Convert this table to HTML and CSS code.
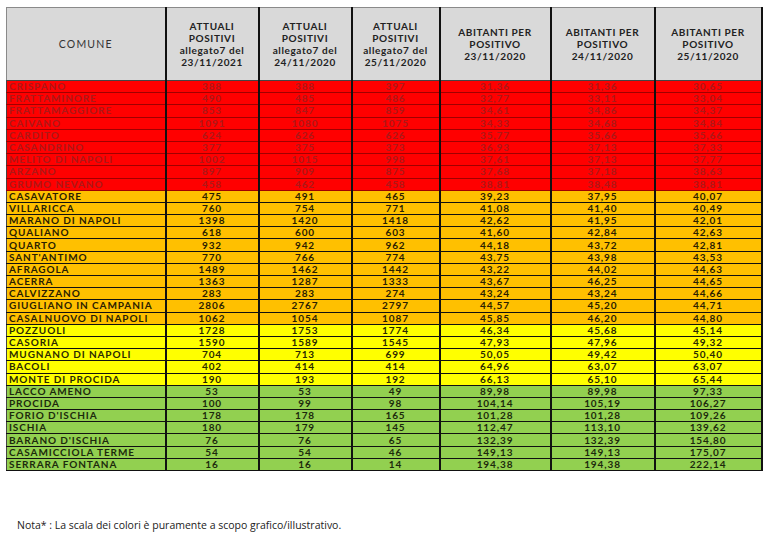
FILE: index.html
```html
<!DOCTYPE html>
<html lang="it">
<head>
    <meta charset="UTF-8">
    <meta name="viewport" content="width=device-width, initial-scale=1.0">
    <title>Positivi per comune</title>
    <link rel="stylesheet" href="styles.css">
</head>
<body>

    <!-- Tabella positivi -->
    <table class="data-table">
        <colgroup>
            <col class="c-name">
            <col class="c-a">
            <col class="c-a">
            <col class="c-b">
            <col class="c-c">
            <col class="c-d">
            <col class="c-e">
        </colgroup>
        <thead>
            <tr>
                <th class="th-comune">COMUNE</th>
                <th>ATTUALI<br>POSITIVI<br>allegato7 del<br>23/11/2021</th>
                <th>ATTUALI<br>POSITIVI<br>allegato7 del<br>24/11/2020</th>
                <th>ATTUALI<br>POSITIVI<br>allegato7 del<br>25/11/2020</th>
                <th>ABITANTI PER<br>POSITIVO<br>23/11/2020</th>
                <th>ABITANTI PER<br>POSITIVO<br>24/11/2020</th>
                <th>ABITANTI PER<br>POSITIVO<br>25/11/2020</th>
            </tr>
        </thead>
        <tbody>
            <tr class="red"><td>CRISPANO</td><td>388</td><td>388</td><td>397</td><td>31,36</td><td>31,36</td><td>30,65</td></tr>
            <tr class="red"><td>FRATTAMINORE</td><td>490</td><td>485</td><td>486</td><td>32,77</td><td>33,11</td><td>33,04</td></tr>
            <tr class="red"><td>FRATTAMAGGIORE</td><td>853</td><td>847</td><td>859</td><td>34,61</td><td>34,86</td><td>34,37</td></tr>
            <tr class="red"><td>CAIVANO</td><td>1091</td><td>1080</td><td>1075</td><td>34,33</td><td>34,68</td><td>34,84</td></tr>
            <tr class="red"><td>CARDITO</td><td>624</td><td>626</td><td>626</td><td>35,77</td><td>35,66</td><td>35,66</td></tr>
            <tr class="red"><td>CASANDRINO</td><td>377</td><td>375</td><td>373</td><td>36,93</td><td>37,13</td><td>37,33</td></tr>
            <tr class="red"><td>MELITO DI NAPOLI</td><td>1002</td><td>1015</td><td>998</td><td>37,61</td><td>37,13</td><td>37,77</td></tr>
            <tr class="red"><td>ARZANO</td><td>897</td><td>909</td><td>875</td><td>37,68</td><td>37,18</td><td>38,63</td></tr>
            <tr class="red"><td>GRUMO NEVANO</td><td>458</td><td>462</td><td>458</td><td>38,81</td><td>38,48</td><td>38,81</td></tr>
            <tr class="orange"><td>CASAVATORE</td><td>475</td><td>491</td><td>465</td><td>39,23</td><td>37,95</td><td>40,07</td></tr>
            <tr class="orange"><td>VILLARICCA</td><td>760</td><td>754</td><td>771</td><td>41,08</td><td>41,40</td><td>40,49</td></tr>
            <tr class="orange"><td>MARANO DI NAPOLI</td><td>1398</td><td>1420</td><td>1418</td><td>42,62</td><td>41,95</td><td>42,01</td></tr>
            <tr class="orange"><td>QUALIANO</td><td>618</td><td>600</td><td>603</td><td>41,60</td><td>42,84</td><td>42,63</td></tr>
            <tr class="orange"><td>QUARTO</td><td>932</td><td>942</td><td>962</td><td>44,18</td><td>43,72</td><td>42,81</td></tr>
            <tr class="orange"><td>SANT'ANTIMO</td><td>770</td><td>766</td><td>774</td><td>43,75</td><td>43,98</td><td>43,53</td></tr>
            <tr class="orange"><td>AFRAGOLA</td><td>1489</td><td>1462</td><td>1442</td><td>43,22</td><td>44,02</td><td>44,63</td></tr>
            <tr class="orange"><td>ACERRA</td><td>1363</td><td>1287</td><td>1333</td><td>43,67</td><td>46,25</td><td>44,65</td></tr>
            <tr class="orange"><td>CALVIZZANO</td><td>283</td><td>283</td><td>274</td><td>43,24</td><td>43,24</td><td>44,66</td></tr>
            <tr class="orange"><td>GIUGLIANO IN CAMPANIA</td><td>2806</td><td>2767</td><td>2797</td><td>44,57</td><td>45,20</td><td>44,71</td></tr>
            <tr class="orange"><td>CASALNUOVO DI NAPOLI</td><td>1062</td><td>1054</td><td>1087</td><td>45,85</td><td>46,20</td><td>44,80</td></tr>
            <tr class="yellow"><td>POZZUOLI</td><td>1728</td><td>1753</td><td>1774</td><td>46,34</td><td>45,68</td><td>45,14</td></tr>
            <tr class="yellow"><td>CASORIA</td><td>1590</td><td>1589</td><td>1545</td><td>47,93</td><td>47,96</td><td>49,32</td></tr>
            <tr class="yellow"><td>MUGNANO DI NAPOLI</td><td>704</td><td>713</td><td>699</td><td>50,05</td><td>49,42</td><td>50,40</td></tr>
            <tr class="yellow"><td>BACOLI</td><td>402</td><td>414</td><td>414</td><td>64,96</td><td>63,07</td><td>63,07</td></tr>
            <tr class="yellow"><td>MONTE DI PROCIDA</td><td>190</td><td>193</td><td>192</td><td>66,13</td><td>65,10</td><td>65,44</td></tr>
            <tr class="green"><td>LACCO AMENO</td><td>53</td><td>53</td><td>49</td><td>89,98</td><td>89,98</td><td>97,33</td></tr>
            <tr class="green"><td>PROCIDA</td><td>100</td><td>99</td><td>98</td><td>104,14</td><td>105,19</td><td>106,27</td></tr>
            <tr class="green"><td>FORIO D'ISCHIA</td><td>178</td><td>178</td><td>165</td><td>101,28</td><td>101,28</td><td>109,26</td></tr>
            <tr class="green"><td>ISCHIA</td><td>180</td><td>179</td><td>145</td><td>112,47</td><td>113,10</td><td>139,62</td></tr>
            <tr class="green"><td>BARANO D'ISCHIA</td><td>76</td><td>76</td><td>65</td><td>132,39</td><td>132,39</td><td>154,80</td></tr>
            <tr class="green"><td>CASAMICCIOLA TERME</td><td>54</td><td>54</td><td>46</td><td>149,13</td><td>149,13</td><td>175,07</td></tr>
            <tr class="green"><td>SERRARA FONTANA</td><td>16</td><td>16</td><td>14</td><td>194,38</td><td>194,38</td><td>222,14</td></tr>
        </tbody>
    </table>

    <p class="note">Nota* : La scala dei colori è puramente a scopo grafico/illustrativo.</p>

</body>
</html>
```

FILE: styles.css
```css
* {
    box-sizing: border-box;
}
body {
    font-family: Lato, "Open Sans", Arial, sans-serif;
    margin: 0;
    padding: 7px 0 0 6px;
    background-color: #ffffff;
    color: #222;
}
.data-table {
    border-collapse: collapse;
    table-layout: fixed;
    width: 755px;
}
.c-name { width: 159px; }
.c-a { width: 93px; }
.c-b { width: 88px; }
.c-c { width: 111px; }
.c-d { width: 104px; }
.c-e { width: 107px; }

.data-table th {
    height: 73px;
    background-color: #d9d9d9;
    font-size: 10px;
    line-height: 12px;
    font-weight: bold;
    letter-spacing: 0.6px;
    color: #222;
    text-align: center;
    vertical-align: middle;
    border-top: 1px solid #8a8a8a;
    border-bottom: 1px solid #444;
    border-left: 2px solid #111;
    border-right: 2px solid #111;
    padding: 0;
}
.data-table th.th-comune {
    font-weight: normal;
    font-size: 10.5px;
    letter-spacing: 1.2px;
    color: #333;
    border-left: 1px solid #8a8a8a;
}
.data-table td {
    height: 12.19px;
    padding: 0;
    font-size: 10px;
    line-height: 11px;
    font-weight: bold;
    letter-spacing: 0.9px;
    text-align: center;
    white-space: nowrap;
    overflow: hidden;
    border-top: 1px solid #111;
    border-bottom: 1px solid #111;
    border-left: 2px solid #111;
    border-right: 2px solid #111;
}
.data-table td:first-child {
    text-align: left;
    padding-left: 2px;
    border-left: 1px solid #444;
}
.red td {
    background-color: #ff0000;
    color: #ad1818;
    border-top-color: #a00000;
    border-bottom-color: #a00000;
}
.orange td {
    background-color: #ffc000;
    color: #2a2000;
}
.yellow td {
    background-color: #ffff00;
    color: #2a2a00;
}
.green td {
    background-color: #92d050;
    color: #1c2a0c;
}
.note {
    font-family: "Open Sans", Arial, sans-serif;
    margin: 47px 0 0 11px;
    font-size: 10.5px;
    line-height: 14px;
    color: #222;
}
```
